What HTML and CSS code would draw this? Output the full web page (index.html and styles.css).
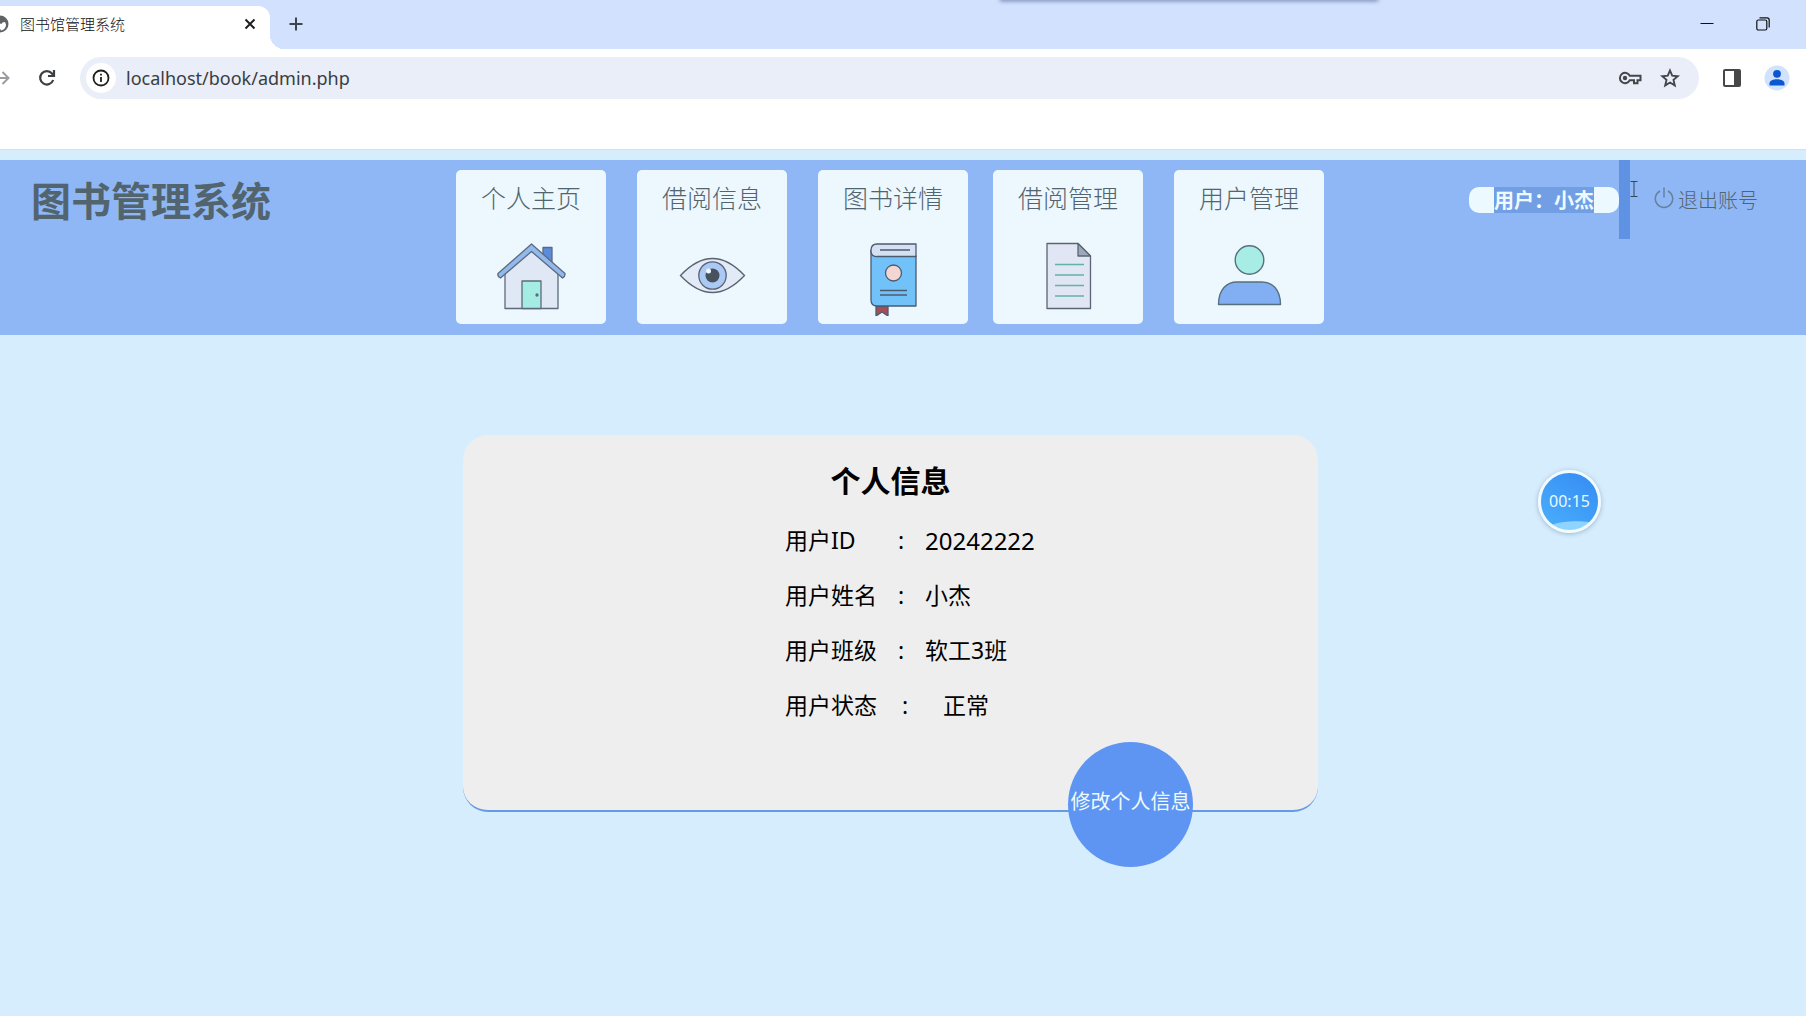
FILE: index.html
```html
<!DOCTYPE html>
<html lang="zh-CN">
<head>
<meta charset="utf-8">
<meta name="viewport" content="width=device-width, initial-scale=1">
<title>图书馆管理系统</title>
<link rel="stylesheet" href="styles.css">
</head>
<body>
<div class="tabstrip">
  <div class="tab">
    <svg class="favicon" viewBox="0 0 18 18" width="18" height="18" aria-hidden="true"><circle cx="9" cy="9" r="8.500" fill="#5f6368"/><path d="M4 9q4-1.500 6.500 0l1-1.500 2.500-.5 1 2.500c0 3-2 5.500-5 6l-1.500-3-2 .5z" fill="#fff"/></svg>
    <span class="tab-title">图书馆管理系统</span>
    <button class="icon-btn" aria-label="关闭标签页"><svg width="12" height="12" viewBox="0 0 12 12"><path d="M1.500 1.500l9 9m0-9l-9 9" stroke="#1f1f1f" stroke-width="2"/></svg></button>
  </div>
  <div class="tab-foot"></div>
  <button class="icon-btn new-tab" aria-label="打开新标签页"><svg width="14" height="14" viewBox="0 0 14 14"><path d="M7 .5v13M.5 7h13" stroke="#41454a" stroke-width="2"/></svg></button>
  <div class="window-controls">
    <button class="icon-btn" aria-label="最小化"><svg width="14" height="14" viewBox="0 0 14 14"><path d="M.5 6.500h13" stroke="#111" stroke-width="1"/></svg></button>
    <button class="icon-btn" aria-label="还原"><svg width="14" height="14" viewBox="0 0 14 14" fill="none" stroke="#111" stroke-width="1.200"><rect x=".8" y="3" width="10" height="10" rx="1.500"/><path d="M3.500.8h7.500q2.200 0 2.200 2.200v7.500"/></svg></button>
  </div>
  <div class="dock-shadow"></div>
</div>
<div class="toolbar">
  <button class="icon-btn" aria-label="前进"><svg width="14" height="14" viewBox="0 0 14 14" fill="none" stroke="#9b9da0" stroke-width="2"><path d="M0 7h12M6.500 1l6 6-6 6"/></svg></button>
  <button class="icon-btn reload" aria-label="重新加载"><svg width="18" height="18" viewBox="0 0 18 18" fill="none" stroke="#3c4043" stroke-width="2.200"><path d="M15.200 11A6.700 6.700 0 1 1 14 4.500l1.500 1.700"/><path d="M16 1v6h-6"/></svg></button>
  <div class="omnibox">
    <span class="site-info"><svg width="18" height="18" viewBox="0 0 18 18"><circle cx="9" cy="9" r="7.500" fill="none" stroke="#1f1f1f" stroke-width="1.800"/><path d="M9 8v5M9 4.700v1.900" stroke="#1f1f1f" stroke-width="1.800"/></svg></span>
    <input class="url" type="text" aria-label="地址" value="localhost/book/admin.php">
    <button class="icon-btn" aria-label="密码"><svg width="24" height="14" viewBox="0 0 24 14" fill="none" stroke="#44474a" stroke-width="2"><path d="M11.800 4.800A5.200 5.200 0 1 0 11.800 9.200H16v3h3.500v-3h3V4.800z"/><circle cx="7" cy="7" r="2.200" fill="#44474a" stroke="none"/></svg></button>
    <button class="icon-btn" aria-label="收藏"><svg width="20" height="20" viewBox="0 0 20 20"><path d="M10 2.500l2.200 5.200 5.600.5-4.300 3.700 1.300 5.500-4.800-2.900-4.800 2.900 1.300-5.500-4.300-3.700 5.600-.5z" fill="none" stroke="#44474a" stroke-width="1.900"/></svg></button>
  </div>
  <button class="icon-btn" aria-label="侧边栏"><svg width="18" height="18" viewBox="0 0 18 18"><rect x="1" y="1" width="16" height="16" rx="1" fill="none" stroke="#474747" stroke-width="2"/><path d="M11 1h6v16h-6z" fill="#474747"/></svg></button>
  <button class="icon-btn" aria-label="用户资料"><svg width="26" height="26" viewBox="0 0 26 26"><circle cx="13" cy="13" r="12.500" fill="#d0e2fc"/><circle cx="13" cy="8.800" r="3.900" fill="#0b57d0"/><path d="M5.500 20.500v-2c0-3 4-4.300 7.500-4.300s7.500 1.300 7.500 4.300v2z" fill="#0b57d0"/></svg></button>
</div>

<header class="site-header">
  <h1 class="brand">图书管理系统</h1>
  <nav class="nav">
    <a class="nav-card" href="#home"><span>个人主页</span>
      <svg viewBox="0 0 75 75" width="75" height="75" stroke="#5d6a7c" stroke-width="1.300" stroke-linejoin="round"><path d="M49 6.500h9v18l-9-8z" fill="#5b8bdc"/><path d="M11 32L37.500 8 64 32v35.500H11z" fill="#e0e7f5"/><path d="M37.500 3L4 32.500q-1 2.500 2.500 4.500L37.500 10.500 68.500 37q3-2 2.500-4.500z" fill="#92b9ee"/><path d="M28 40h19v27.500H28z" fill="#a4ece4"/><circle cx="43" cy="54" r="1" fill="#44525c"/></svg></a>
    <a class="nav-card" href="#borrow"><span>借阅信息</span>
      <svg viewBox="0 0 75 75" width="75" height="75" stroke="#59626f" stroke-width="1.300"><path d="M5.500 34.500Q37.500.5 69.500 34.500 37.500 68.500 5.500 34.500z" fill="#e2e9f7"/><circle cx="37.500" cy="34.500" r="13.700" fill="#abc9f5"/><circle cx="37.500" cy="34.500" r="7" fill="#46525e" stroke="none"/><circle cx="33.500" cy="30" r="2.500" fill="#eff8fe" stroke="none"/></svg></a>
    <a class="nav-card wide-gap" href="#books"><span>图书详情</span>
      <svg viewBox="0 0 75 75" width="75" height="75" stroke="#4c5a70" stroke-width="1.300" stroke-linejoin="round"><path d="M20 65h12v10l-6-4-6 4z" fill="#a44f55"/><path d="M15 9v50q0 6 6 6h39V15H20z" fill="#72c2fa"/><path d="M60 3H21q-6 0-6 6.500T21 15.500h39z" fill="#d5e1f3"/><path d="M24 9h30M24 49.500h27M24 54h27" fill="none"/><circle cx="37.500" cy="32" r="8" fill="#f2d6d3"/></svg></a>
    <a class="nav-card" href="#loans"><span>借阅管理</span>
      <svg viewBox="0 0 75 75" width="75" height="75" stroke="#5b6571" stroke-width="1.300" stroke-linejoin="round"><path d="M16 2.500h31L59.500 15v52.500H16z" fill="#e0e6f3"/><path d="M47 2.500V15h12.500z" fill="#9ca9bd"/><path d="M24 23.500h29M24 34h29M24 44.500h29M24 55h29" stroke="#62b2a8"/></svg></a>
    <a class="nav-card" href="#users"><span>用户管理</span>
      <svg viewBox="0 0 75 75" width="75" height="75" stroke="#56707d" stroke-width="1.400" stroke-linejoin="round"><circle cx="37.500" cy="19" r="14.300" fill="#a8ece6"/><path d="M6.500 63.500C6.500 48 15 41 25 41h25c10 0 18.500 7 18.500 22.500z" fill="#82aef3"/></svg></a>
  </nav>
  <div class="account">
    <div class="user-pill"><span class="selected">用户：小杰</span></div>
    <div class="selected-gap"></div>
    <a class="logout" href="#logout"><svg width="20" height="22" viewBox="0 0 20 22" fill="none" stroke="#65829f" stroke-width="1.500"><path d="M6 4A8.700 8.700 0 1 0 14 4M10 .5v10"/></svg><span>退出账号</span></a>
    <svg class="text-cursor" width="8" height="18" viewBox="0 0 8 18" fill="none" stroke="#34465c"><path d="M.5 1.500h7M.5 16.500h7M4 1.500v15"/></svg>
  </div>
</header>

<main class="content">
  <section class="panel">
    <h2>个人信息</h2>
    <dl class="info">
      <div><dt>用户ID</dt><dd class="number">20242222</dd></div>
      <div><dt>用户姓名</dt><dd>小杰</dd></div>
      <div><dt>用户班级</dt><dd>软工3班</dd></div>
      <div class="status"><dt>用户状态</dt><dd>正常</dd></div>
    </dl>
    <button class="edit">修改个人信息</button>
  </section>
</main>

<div class="timer"><span>00:15</span></div>
</body>
</html>
```
FILE: styles.css
```css
* { box-sizing: border-box; }

body {
  margin: 0;
  min-height: 100vh;
  background: #d6edfe;
  font-family: "Noto Sans", "Noto Sans CJK SC", sans-serif;
  position: relative;
  overflow-x: hidden;
}

button { font: inherit; border: 0; background: none; padding: 0; cursor: pointer; }
a { color: inherit; text-decoration: none; }
svg { display: block; flex: none; }

.icon-btn { display: flex; align-items: center; justify-content: center; flex: none; }

/* Browser frame */
.tabstrip {
  position: relative;
  display: flex;
  height: 49px;
  padding-top: 6px;
  background: #d1e1fe;
}
.tab {
  display: flex;
  align-items: center;
  width: 270px;
  padding: 0 14px 7px 0;
  background: #fff;
  border-radius: 0 12px 0 0;
}
.favicon { margin-left: -9px; }
.tab-title {
  flex: 1;
  margin-left: 11px;
  font-size: 15px;
  font-weight: 300;
  line-height: 20px;
  color: #111;
}
.tab-foot {
  align-self: flex-end;
  width: 14px;
  height: 14px;
  background: radial-gradient(circle at 100% 0, transparent 14px, #fff 14px);
}
.new-tab { margin: 0 0 7px 5px; }
.window-controls { display: flex; gap: 42px; margin: 0 36px 7px auto; }
.dock-shadow {
  position: absolute;
  top: -4px;
  left: 1000px;
  width: 378px;
  height: 4px;
  box-shadow: 0 1px 4px #6b7fa6;
}
.toolbar {
  display: flex;
  align-items: center;
  height: 101px;
  padding: 8px 16px 50px 0;
  background: #fff;
  border-bottom: 1px solid #dcdfe2;
}
.toolbar > .icon-btn:first-child { margin-left: -4px; }
.reload { margin: 0 24px 0 28px; }
.omnibox {
  display: flex;
  align-items: center;
  gap: 18px;
  flex: 1;
  height: 42px;
  margin-right: 24px;
  padding: 0 19px 0 6px;
  border-radius: 21px;
  background: #e9eef8;
}
.site-info {
  display: grid;
  place-items: center;
  width: 30px;
  height: 30px;
  margin-right: -8px;
  border-radius: 50%;
  background: #fff;
}
.url {
  flex: 1;
  min-width: 0;
  border: 0;
  padding: 0;
  background: none;
  font: 18px/24px "Noto Sans", sans-serif;
  color: #3a3d42;
}
.toolbar > .icon-btn:last-child { margin-left: 23px; }

/* Site header */
.site-header {
  display: grid;
  grid-template-columns: 1fr auto 1fr;
  align-items: start;
  margin-top: 10px;
  padding-right: 26px;
  background: #8fb7f6;
  color: #52646e;
}
.brand {
  margin: 11px 0 0 31px;
  font-size: 40px;
  line-height: 60px;
  white-space: nowrap;
}
.nav { display: flex; gap: 31px; padding: 10px 0 11px; }
.nav-card {
  display: flex;
  flex-direction: column;
  align-items: center;
  gap: 27px;
  width: 150px;
  height: 154px;
  padding-top: 12px;
  border-radius: 5px;
  background: #ecf8fe;
  font-size: 25px;
  font-weight: 300;
  line-height: 32px;
}
.wide-gap { margin-right: -6px; }
.account {
  position: relative;
  display: flex;
  align-items: flex-start;
  justify-self: end;
  padding-right: 22px;
  font-size: 20px;
  line-height: 28px;
  white-space: nowrap;
}
.user-pill {
  width: 150px;
  height: 26px;
  margin-top: 27px;
  border-radius: 10px;
  background: #ecf9ff;
  text-align: center;
  font-weight: 700;
}
.selected { display: inline-block; height: 26px; background: #729fe4; color: #eefaff; }
.selected-gap { width: 11px; height: 79px; background: #5f92e3; }
.logout { display: flex; gap: 4px; margin: 27px 0 0 24px; font-weight: 300; }
.text-cursor { position: absolute; left: 161px; top: 20px; }

/* Personal information */
.content { padding: 100px 25px 60px 0; }
.panel {
  position: relative;
  width: 855px;
  max-width: 100%;
  min-height: 377px;
  margin: 0 auto;
  padding-top: 24px;
  border-bottom: 2px solid #6699e6;
  border-radius: 25px;
  background: #eee;
}
.panel h2 {
  margin: 0;
  text-align: center;
  font-size: 30px;
  line-height: 44px;
}
.info { margin: 10px 0 0 322px; font-size: 23px; line-height: 55px; }
.info div { display: flex; }
.info dt { position: relative; width: 140px; }
.info dt::after { content: ":"; position: absolute; left: 113px; }
.info dd { margin: 0; }
.info .number { font-size: 24px; }
.info .status dt { width: 158px; }
.info .status dt::after { left: 117px; }
.edit {
  position: absolute;
  right: 125px;
  bottom: -57px;
  width: 125px;
  height: 125px;
  padding-bottom: 8px;
  border-radius: 50%;
  background: #5e95f2;
  color: #effaff;
  font-size: 20px;
  white-space: nowrap;
}

/* Floating recorder clock */
.timer {
  position: absolute;
  top: 470px;
  right: 205px;
  display: grid;
  place-items: center;
  width: 63px;
  height: 63px;
  padding-bottom: 2px;
  border: 3px solid #f1fbff;
  border-radius: 50%;
  background: radial-gradient(ellipse 30px 8px at 62% 98%, #8fd4ff 0 90%, transparent), linear-gradient(35deg, #4bb0fb, #348bf3);
  box-shadow: 0 1px 5px #9bb4c9;
  color: #e6faff;
  font-size: 16px;
}
```
